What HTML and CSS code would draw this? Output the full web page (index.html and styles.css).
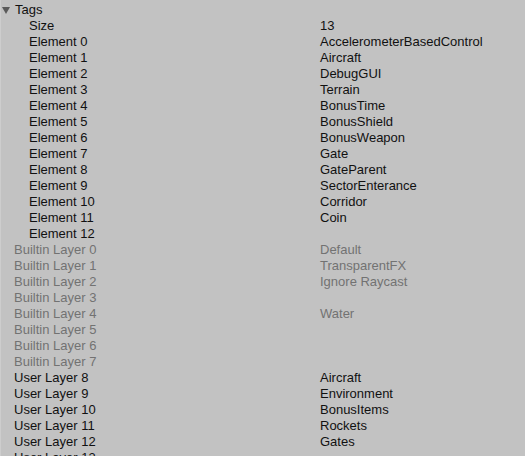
FILE: index.html
```html
<!DOCTYPE html>
<html>
<head>
<meta charset="utf-8">
<link rel="stylesheet" href="styles.css">
</head>
<body>
<div class="panel">
  <div class="row head"><span class="tri"></span><span class="lbl">Tags</span></div>
  <div class="row sub"><span class="lbl">Size</span><span class="val">13</span></div>
  <div class="row sub"><span class="lbl">Element 0</span><span class="val">AccelerometerBasedControl</span></div>
  <div class="row sub"><span class="lbl">Element 1</span><span class="val">Aircraft</span></div>
  <div class="row sub"><span class="lbl">Element 2</span><span class="val">DebugGUI</span></div>
  <div class="row sub"><span class="lbl">Element 3</span><span class="val">Terrain</span></div>
  <div class="row sub"><span class="lbl">Element 4</span><span class="val">BonusTime</span></div>
  <div class="row sub"><span class="lbl">Element 5</span><span class="val">BonusShield</span></div>
  <div class="row sub"><span class="lbl">Element 6</span><span class="val">BonusWeapon</span></div>
  <div class="row sub"><span class="lbl">Element 7</span><span class="val">Gate</span></div>
  <div class="row sub"><span class="lbl">Element 8</span><span class="val">GateParent</span></div>
  <div class="row sub"><span class="lbl">Element 9</span><span class="val">SectorEnterance</span></div>
  <div class="row sub"><span class="lbl">Element 10</span><span class="val">Corridor</span></div>
  <div class="row sub"><span class="lbl">Element 11</span><span class="val">Coin</span></div>
  <div class="row sub"><span class="lbl">Element 12</span><span class="val"></span></div>
  <div class="row dis"><span class="lbl">Builtin Layer 0</span><span class="val">Default</span></div>
  <div class="row dis"><span class="lbl">Builtin Layer 1</span><span class="val">TransparentFX</span></div>
  <div class="row dis"><span class="lbl">Builtin Layer 2</span><span class="val">Ignore Raycast</span></div>
  <div class="row dis"><span class="lbl">Builtin Layer 3</span><span class="val"></span></div>
  <div class="row dis"><span class="lbl">Builtin Layer 4</span><span class="val">Water</span></div>
  <div class="row dis"><span class="lbl">Builtin Layer 5</span><span class="val"></span></div>
  <div class="row dis"><span class="lbl">Builtin Layer 6</span><span class="val"></span></div>
  <div class="row dis"><span class="lbl">Builtin Layer 7</span><span class="val"></span></div>
  <div class="row"><span class="lbl">User Layer 8</span><span class="val">Aircraft</span></div>
  <div class="row"><span class="lbl">User Layer 9</span><span class="val">Environment</span></div>
  <div class="row"><span class="lbl">User Layer 10</span><span class="val">BonusItems</span></div>
  <div class="row"><span class="lbl">User Layer 11</span><span class="val">Rockets</span></div>
  <div class="row"><span class="lbl">User Layer 12</span><span class="val">Gates</span></div>
  <div class="row"><span class="lbl">User Layer 13</span><span class="val"></span></div>
</div>
</body>
</html>
```
FILE: styles.css
```css
html, body {
  margin: 0;
  padding: 0;
  background: #c2c2c2;
  overflow: hidden;
}
.panel {
  width: 525px;
  height: 456px;
  box-sizing: border-box;
  border-left: 1px solid #cdcdcd;
  padding-top: 2px;
  font-family: "Liberation Sans", Arial, sans-serif;
  font-size: 13px;
  color: #111;
  overflow: hidden;
}
.row {
  display: grid;
  grid-template-columns: 319px 1fr;
  height: 16px;
  line-height: 16px;
  white-space: nowrap;
}
.row .lbl {
  padding-left: 13px;
}
.row.sub .lbl {
  padding-left: 28px;
}
.row.dis {
  color: #727272;
}
.row.head {
  display: flex;
  align-items: center;
}
.row.head .lbl {
  padding-left: 5px;
}
.tri {
  width: 0;
  height: 0;
  margin-left: 1px;
  border-left: 4px solid transparent;
  border-right: 4px solid transparent;
  border-top: 7px solid #5a5a5a;
}
```
